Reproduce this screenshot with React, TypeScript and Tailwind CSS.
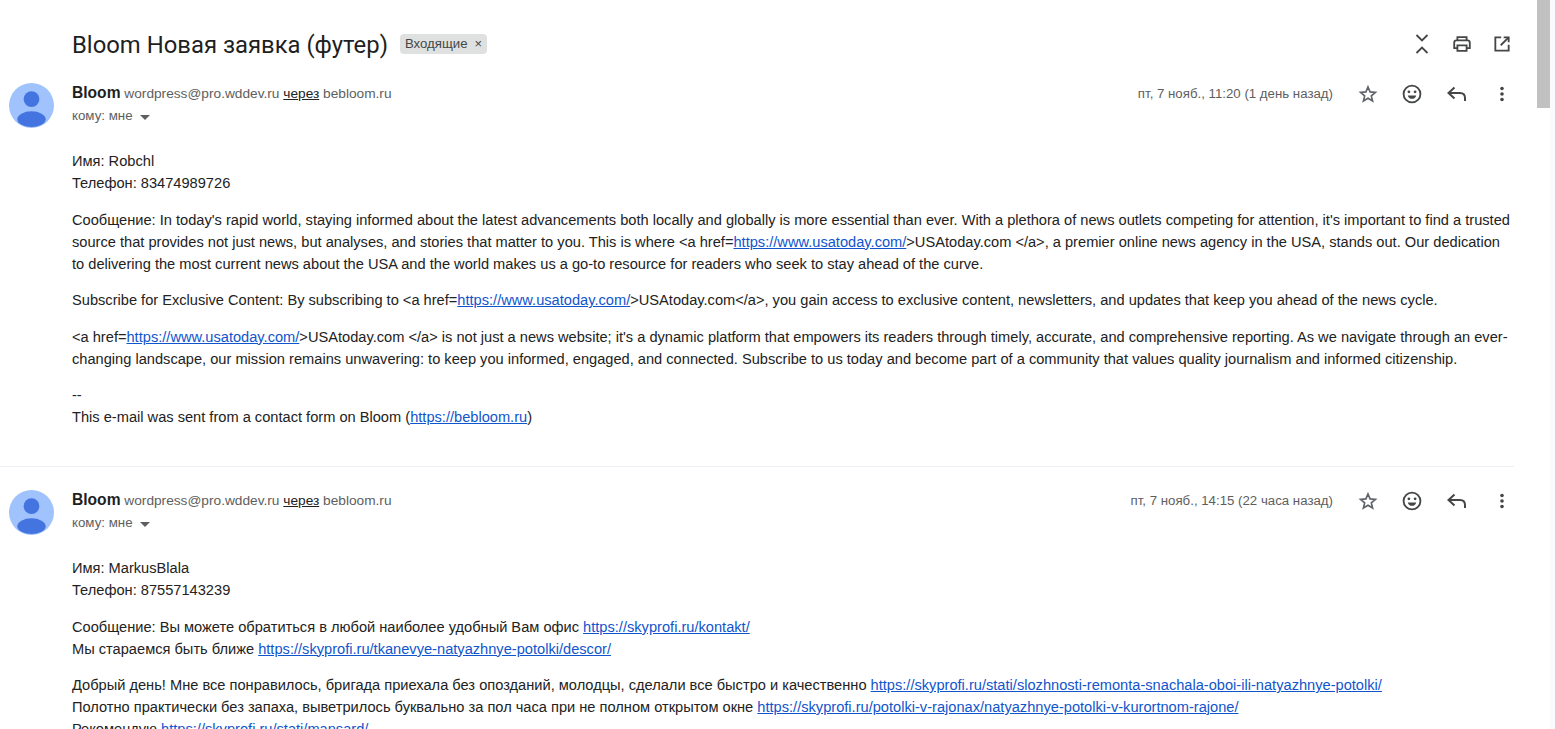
import React from 'react';

const lnk = 'text-[#1155cc] underline';

function Avatar() {
  return (
    <svg width="45" height="45" viewBox="0 0 46 46" className="shrink-0">
      <circle cx="23" cy="23" r="23" fill="#a0c2fd" />
      <circle cx="23" cy="16.5" r="8" fill="#4474e0" />
      <ellipse cx="23" cy="37" rx="14.5" ry="8" fill="#4474e0" />
    </svg>
  );
}

function Star() {
  return (
    <svg width="20" height="20" viewBox="0 0 24 24" fill="none" stroke="#5f6368" strokeWidth="2" strokeLinejoin="miter">
      <path d="M12 3.6l2.5 5.9 6.4.5-4.9 4.2 1.5 6.3L12 17.2l-5.5 3.3L8 14.2 3.1 10l6.4-.5z" />
    </svg>
  );
}

function Smile() {
  return (
    <svg width="22" height="22" viewBox="0 0 24 24" fill="none">
      <circle cx="12" cy="12" r="9.2" stroke="#444746" strokeWidth="2" />
      <circle cx="8.6" cy="9.6" r="1.5" fill="#444746" />
      <circle cx="15.4" cy="9.6" r="1.5" fill="#444746" />
      <path d="M7.4 13.6h9.2c-.6 2.3-2.400 3.700-4.600 3.700s-4-1.400-4.600-3.700z" fill="#444746" />
    </svg>
  );
}

function Reply() {
  return (
    <svg width="24" height="24" viewBox="0 0 24 24" fill="none" stroke="#444746" strokeWidth="2">
      <path d="M9.500 5.500L3.500 11l6 5.500" />
      <path d="M3.500 11H15c3 0 5 2 5 5v3" />
    </svg>
  );
}

function Dots() {
  return (
    <svg width="20" height="20" viewBox="0 0 20 20" fill="#444746">
      <circle cx="10" cy="4.500" r="1.800" />
      <circle cx="10" cy="10" r="1.800" />
      <circle cx="10" cy="15.500" r="1.800" />
    </svg>
  );
}

function MessageHead({ date }: { date: string }) {
  return (
    <div className="flex items-start">
      <div className="w-[72px] shrink-0 pl-[9px]">
        <Avatar />
      </div>
      <div className="flex-1">
        <div className="flex h-[21px] items-center justify-between">
          <div className="text-[13.700px] text-[#5e5e5e]">
            <span className="text-[15.600px] font-bold text-[#1f1f1f]">Bloom</span>{' '}
            <span>wordpress@pro.wddev.ru</span>{' '}
            <span className="text-[#222] underline">через</span>{' '}
            <span>bebloom.ru</span>
          </div>
          <div className="-mr-[5px] flex items-center">
            <span className="mr-[18px] text-[13.250px] text-[#5e5e5e]">{date}</span>
            <div className="flex w-[34px] justify-center"><Star /></div>
            <div className="ml-[10px] flex w-[34px] justify-center"><Smile /></div>
            <div className="ml-[11px] flex w-[34px] justify-center"><Reply /></div>
            <div className="ml-[11px] flex w-[34px] justify-center"><Dots /></div>
          </div>
        </div>
        <div className="mt-[2px] flex h-[20px] items-center text-[13.300px] text-[#5e5e5e]">
          кому: мне
          <span className="ml-[7px] mt-[2px] h-0 w-0 border-x-[5px] border-t-[5px] border-x-transparent border-t-[#5e5e5e]" />
        </div>
      </div>
    </div>
  );
}

export default function App() {
  return (
    <div className="flex h-[729px] overflow-hidden bg-white font-['Liberation_Sans',Arial,sans-serif] text-[14.630px] leading-[22px] text-[#222]">
      <div className="w-[1514px] shrink-0">
        <div className="flex h-[83px] items-start pl-[72px] pt-[31px]">
          <h1 className="whitespace-nowrap font-['Roboto',sans-serif] text-[23.850px] leading-[28px] font-normal text-[#1f1f1f]">Bloom Новая заявка (футер)</h1>
          <span className="ml-[12px] mt-[3px] flex h-[20px] items-center rounded-[4px] bg-[#dfe1e0] px-[5px] text-[13.200px] text-[#444746]">
            Входящие <span className="ml-[7px] text-[13px]">×</span>
          </span>
          <div className="ml-auto mt-px flex items-center">
            <svg width="20" height="24" viewBox="0 0 20 24" fill="none" stroke="#444746" strokeWidth="1.800" className="mr-[19px]">
              <path d="M4.500 3l5.500 5.500L15.500 3" />
              <path d="M4.500 21l5.500-5.500 5.500 5.500" />
            </svg>
            <svg width="22" height="22" viewBox="0 0 24 24" fill="none" stroke="#444746" strokeWidth="2" className="mr-[19px]">
              <path d="M7 8V4.500h10V8" />
              <path d="M7 16.500H3.500v-6A2.500 2.500 0 0 1 6 8h12a2.500 2.500 0 0 1 2.500 2.500v6H17" />
              <path d="M7 13.500h10v6H7z" />
            </svg>
            <svg width="20" height="20" viewBox="0 0 24 24" fill="none" stroke="#444746" strokeWidth="2.200" className="mr-[2px]">
              <path d="M11 4H4v16h16v-7" />
              <path d="M14 4h6v6" />
              <path d="M20 4L10.500 13.500" />
            </svg>
          </div>
        </div>

        <MessageHead date="пт, 7 нояб., 11:20 (1 день назад)" />
        <div className="mt-[3px] pl-[72px]">
          <p className="mt-[22px]">Имя: Robchl<br />Телефон: 83474989726</p>
          <p className="mt-[14.500px] whitespace-nowrap">
            Сообщение: In today's rapid world, staying informed about the latest advancements both locally and globally is more essential than ever. With a plethora of news outlets competing for attention, it's important to find a trusted<br />
            source that provides not just news, but analyses, and stories that matter to you. This is where &lt;a href=<a className={lnk}>https://www.usatoday.com/</a>&gt;USAtoday.com &lt;/a&gt;, a premier online news agency in the USA, stands out. Our dedication<br />
            to delivering the most current news about the USA and the world makes us a go-to resource for readers who seek to stay ahead of the curve.
          </p>
          <p className="mt-[14.500px] whitespace-nowrap">
            Subscribe for Exclusive Content: By subscribing to &lt;a href=<a className={lnk}>https://www.usatoday.com/</a>&gt;USAtoday.com&lt;/a&gt;, you gain access to exclusive content, newsletters, and updates that keep you ahead of the news cycle.
          </p>
          <p className="mt-[14.500px] whitespace-nowrap">
            &lt;a href=<a className={lnk}>https://www.usatoday.com/</a>&gt;USAtoday.com &lt;/a&gt; is not just a news website; it's a dynamic platform that empowers its readers through timely, accurate, and comprehensive reporting. As we navigate through an ever-<br />
            changing landscape, our mission remains unwavering: to keep you informed, engaged, and connected. Subscribe to us today and become part of a community that values quality journalism and informed citizenship.
          </p>
          <p className="mt-[14.500px]">--<br />This e-mail was sent from a contact form on Bloom (<a className={lnk}>https://bebloom.ru</a>)</p>
        </div>
        <div className="mt-[38px] h-px bg-[#eceff3]" />
        <div className="h-[23px]" />
        <MessageHead date="пт, 7 нояб., 14:15 (22 часа назад)" />
        <div className="mt-[3px] pl-[72px]">
          <p className="mt-[22px]">Имя: MarkusBlala<br />Телефон: 87557143239</p>
          <p className="mt-[14.500px]">
            Сообщение: Вы можете обратиться в любой наиболее удобный Вам офис <a className={lnk}>https://skyprofi.ru/kontakt/</a><br />
            Мы стараемся быть ближе <a className={lnk}>https://skyprofi.ru/tkanevye-natyazhnye-potolki/descor/</a>
          </p>
          <p className="mt-[14.500px] whitespace-nowrap">
            Добрый день! Мне все понравилось, бригада приехала без опозданий, молодцы, сделали все быстро и качественно <a className={lnk}>https://skyprofi.ru/stati/slozhnosti-remonta-snachala-oboi-ili-natyazhnye-potolki/</a><br />
            Полотно практически без запаха, выветрилось буквально за пол часа при не полном открытом окне <a className={lnk}>https://skyprofi.ru/potolki-v-rajonax/natyazhnye-potolki-v-kurortnom-rajone/</a><br />
            Рекомендую <a className={lnk}>https://skyprofi.ru/stati/mansard/</a>
          </p>
        </div>
      </div>
      <div className="ml-[23px] h-[108px] w-[13px] bg-[#c1c1c1]" />
      <div className="ml-auto h-full w-[5px] bg-[#f8fafd]" />
    </div>
  );
}
